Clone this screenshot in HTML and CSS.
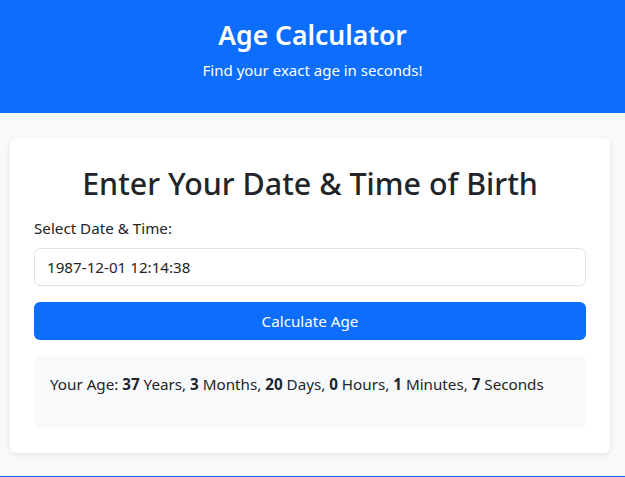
FILE: index.html
```html
<!DOCTYPE html>
<html lang="en">
<head>
<meta charset="utf-8">
<title>Age Calculator</title>
<link rel="stylesheet" href="styles.css">
</head>
<body>
<header class="site-header">
  <h1 class="site-title">Age Calculator</h1>
  <p class="site-sub">Find your exact age in seconds!</p>
</header>
<main class="container">
  <section class="card">
    <h2 class="card-title">Enter Your Date &amp; Time of Birth</h2>
    <label class="field-label" for="dob">Select Date &amp; Time:</label>
    <div class="input" id="dob">1987-12-01 12:14:38</div>
    <button class="btn" type="button">Calculate Age</button>
    <div class="result">
      <p class="result-text">Your Age: <strong>37</strong> Years, <strong>3</strong> Months, <strong>20</strong> Days, <strong>0</strong> Hours, <strong>1</strong> Minutes, <strong>7</strong> Seconds</p>
    </div>
  </section>
</main>
<footer class="site-footer"></footer>
</body>
</html>
```

FILE: styles.css
```css
* { box-sizing: border-box; }
html, body { margin: 0; padding: 0; }
body {
  background: #f8f9fa;
  color: #212529;
  font-family: "Noto Sans", "Open Sans", sans-serif;
  font-size: 15.2px;
  line-height: 1.5;
}
.site-header {
  background: #0d6efd;
  color: #fff;
  text-align: center;
  padding: 17px 16px 0;
  height: 113px;
}
.site-title {
  margin: 0 0 5px;
  font-size: 26.5px;
  line-height: 36px;
  font-weight: 600;
}
.site-sub {
  margin: 0;
  font-size: 15px;
  line-height: 24px;
}
.container {
  padding: 25px 15px 0 10px;
  height: 363px;
}
.card {
  background: #fff;
  border-radius: 6px;
  box-shadow: 0 2px 6px rgba(0,0,0,0.08);
  padding: 24px 24px 25px;
  display: flex;
  flex-direction: column;
}
.card-title {
  margin: 0 0 12px;
  text-align: center;
  font-size: 30.4px;
  line-height: 44px;
  font-weight: 500;
}
.field-label {
  display: block;
  margin-bottom: 10px;
  line-height: 20px;
}
.input {
  height: 38px;
  border: 1px solid #dee2e6;
  border-radius: 6px;
  padding: 0 12px;
  display: flex;
  align-items: center;
  background: #fff;
}
.btn {
  margin-top: 16px;
  height: 38px;
  border: 0;
  border-radius: 6px;
  background: #0d6efd;
  color: #fff;
  font: inherit;
}
.result {
  margin-top: 16px;
  background: #f8f9fa;
  border-radius: 6px;
  padding: 16px 16px 1px;
}
.result-text {
  margin: 0 0 31px;
  line-height: 24px;
}
.result-text strong { font-weight: 700; }
.site-footer {
  background: #0d6efd;
  height: 60px;
}
```
